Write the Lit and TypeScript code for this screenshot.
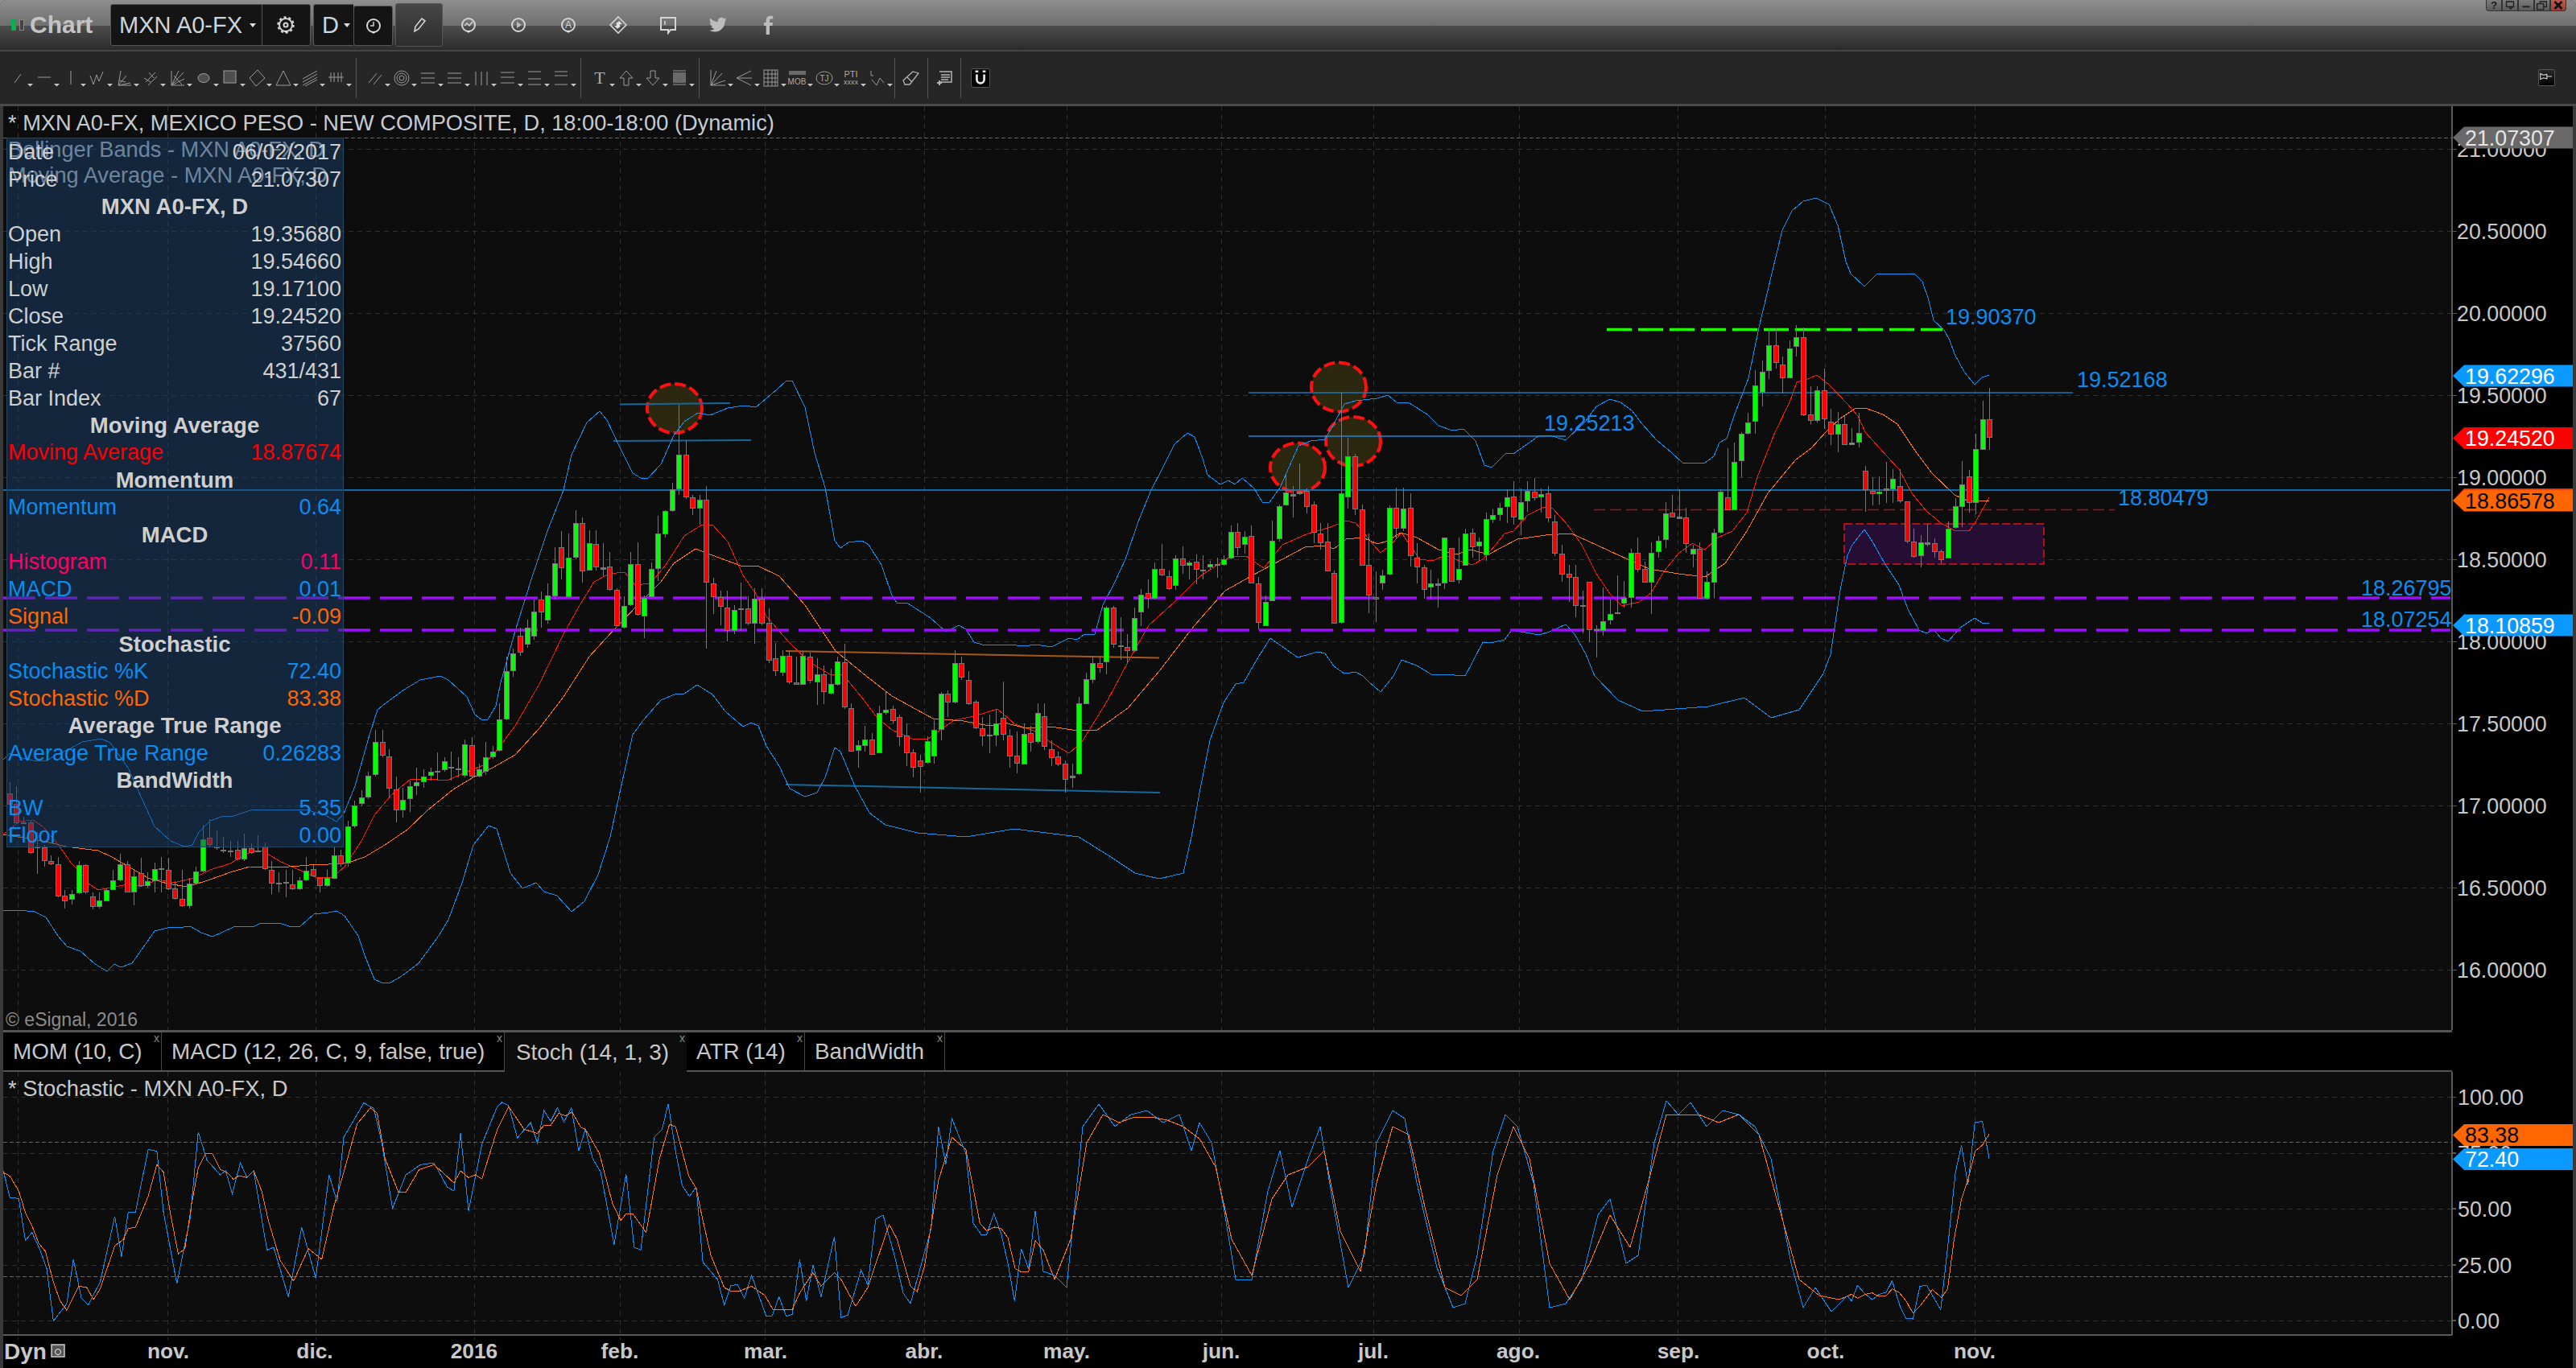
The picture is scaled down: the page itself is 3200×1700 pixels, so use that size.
import { LitElement, html, svg, css } from 'lit';
import { customElement } from 'lit/decorators.js';

type Bar = [number, number, number, number, number];
type Pt = [number, number];

const G = 1, R = 0, N = 2;

// candles in screen px: body top, body bottom, wick top, wick bottom, colour.
// listed newest first, index k sits at x = LAST_X - k * STEP
const LAST_X = 2471.4;
const STEP = 8.57;

const RECENT: Bar[] = [
	[521,543,482,559,R],[521,558,498,558,G],[558,624,539,639,G],[592,624,584,637,R],[602,629,573,655,G],[629,655,619,657,G],[657,693,648,694,G],[685,695,683,700,R],[675,685,669,693,R],[674,676,651,679,N],
	[674,690,665,705,G],[673,691,657,693,R],[623,672,623,675,R],[604,622,583,625,R],[595,607,583,625,G],[607,609,574,625,N],[611,613,592,627,G],[610,613,593,628,R],[585,608,579,636,R],[538,549,513,556,G],
	[550,552,532,553,G],[527,552,517,553,R],[527,539,512,562,G],[524,539,508,553,R],[485,520,458,533,R],[485,522,480,525,G],[515,522,480,527,R],[419,515,407,517,R],[419,430,404,443,G],[433,469,423,470,G],
	[453,469,443,489,R],[429,450,408,458,R],[429,460,408,471,G],[462,487,448,505,G],[479,523,460,539,G],[525,538,513,540,G],[539,572,537,593,G],[574,633,550,634,G],[618,633,557,634,R],[611,661,608,663,G],
	[662,723,657,743,G],[723,743,710,745,G],[682,743,674,744,R],[682,688,677,705,G],[643,675,631,687,R],[642,644,608,645,N],[637,642,615,643,R],[638,670,624,681,G],[672,685,666,693,G],[687,723,674,763,G],
	[707,723,698,723,R],[687,707,668,711,R],[687,742,682,755,G],[743,749,722,755,G],[761,762,715,763,N],
];

const SUMMER: Bar[] = [
	[763,770,745,776,G],[772,783,730,790,G],[782,783,777,817,N],[723,782,723,798,R],[752,753,734,787,N],[717,752,702,767,R],[713,717,702,748,R],[688,713,677,723,R],[648,687,640,691,R],[613,643,604,649,R],
	[614,617,607,637,G],[611,618,594,622,R],[610,622,598,636,G],[624,645,607,665,G],[617,642,598,652,R],[618,629,608,650,G],[631,639,625,647,G],[640,645,633,650,G],[645,689,637,697,G],[673,678,668,697,G],
	[662,679,657,693,R],[663,702,657,703,G],[707,720,668,725,G],[681,722,681,723,R],[668,724,668,732,G],[725,727,719,755,N],[725,729,708,745,G],[705,732,702,744,R],[693,704,675,725,R],[631,690,613,704,R],
	[632,656,606,660,G],[631,656,606,670,R],[631,713,628,715,G],[715,724,708,733,G],[742,744,710,773,R],[702,739,663,762,R],[633,702,627,703,R],[567,632,564,640,R],[567,617,544,632,G],[613,773,488,775,G],
	[712,774,709,775,R],[673,709,650,710,R],[663,674,650,683,R],[627,661,623,675,R],[610,629,607,638,R],[611,613,576,615,N],[614,616,604,643,N],[612,627,588,628,G],[629,669,627,673,G],[672,746,647,747,G],
	[748,777,740,778,G],[725,773,717,782,R],[666,724,653,724,R],[667,676,660,688,G],[661,680,650,690,R],[661,693,653,695,G],[695,701,690,703,G],[701,702,693,718,N],[701,704,697,708,G],[708,709,690,720,N],
	[698,707,689,726,R],[699,702,697,720,G],[694,702,679,713,R],[694,727,690,733,G],[716,731,709,733,R],[707,714,676,716,R],[707,743,699,745,G],[737,743,720,756,R],[739,760,732,778,G],[768,808,755,810,G],
	[804,808,788,825,R],[802,803,767,820,N],[755,800,753,805,R],[755,822,753,838,G],[824,829,817,836,R],[824,844,816,849,G],
];

const SPRING: Bar[] = [
	[844,874,836,875,G],[874,961,866,963,G],[964,966,949,979,N],[949,968,945,985,R],[940,949,934,952,R],[931,941,920,952,R],[890,927,874,932,R],[886,921,874,924,G],[911,922,902,934,R],[912,949,899,950,G],
	[939,948,909,961,R],[914,939,906,954,R],[892,912,847,920,R],[899,913,881,927,G],[913,914,888,936,N],[905,914,891,927,R],[872,904,870,906,R],[845,874,834,876,R],[824,841,816,845,R],[824,872,808,874,G],
	[862,872,858,891,R],[862,906,860,920,G],[907,939,895,949,G],[921,947,915,949,G],[945,952,938,985,R],[935,953,931,966,R],[914,935,899,952,R],[891,915,888,927,R],[881,895,877,899,R],[882,885,859,888,G],
	[886,935,877,936,G],[919,937,911,938,R],[919,926,902,934,G],[926,932,920,954,G],[880,933,874,934,R],[823,878,800,881,R],[822,850,816,852,G],[850,861,831,863,G],[838,859,827,875,R],[838,847,818,876,G],
	[816,845,811,849,R],[815,850,809,851,G],[848,850,816,850,R],[815,847,809,850,R],[815,835,808,840,G],[818,833,799,840,R],[774,820,756,824,R],[744,774,731,777,R],[744,774,731,800,G],[756,774,741,777,R],
	[756,757,724,784,N],[758,783,752,788,G],[755,783,734,797,R],[742,753,734,777,R],[725,741,718,763,R],[621,723,604,806,R],[621,631,615,652,G],[618,631,615,640,R],[565,617,547,620,R],[565,607,503,615,G],
	[608,634,600,636,G],[635,663,634,668,G],[663,706,641,722,G],[707,741,699,743,G],[743,765,740,793,G],[701,763,674,765,R],[701,751,686,753,G],[753,779,741,781,G],[733,777,731,779,R],[704,732,686,734,R],
	[705,707,675,716,N],[676,704,659,709,R],[675,708,659,709,G],[650,709,643,724,R],[650,692,634,695,G],[693,741,663,743,G],
	[680,705,660,720,R],[700,740,680,745,G],[740,770,725,775,G],[745,760,735,780,R],[760,790,745,795,G],[780,800,770,805,G],[790,810,780,815,R],
];

// oldest stretch, written left to right, flipped below
const WINTER: Bar[] = [
	[986,999,972,1011,R],[999,1022,977,1022,R],[1022,1023,1015,1023,N],[1022,1059,1020,1061,R],[1052,1053,1034,1086,N],[1053,1069,1050,1077,R],[1070,1073,1063,1075,R],[1074,1113,1065,1115,R],[1113,1119,1106,1129,R],[1111,1117,1106,1124,G],
	[1075,1109,1070,1111,G],[1075,1108,1074,1111,R],[1114,1126,1109,1130,R],[1119,1126,1109,1129,G],[1106,1119,1104,1120,G],[1094,1105,1081,1106,G],[1074,1093,1061,1095,G],[1074,1108,1070,1109,R],[1089,1108,1081,1125,G],[1085,1100,1066,1102,R],
	[1095,1100,1084,1103,G],[1080,1094,1072,1109,G],[1079,1080,1065,1109,N],[1081,1104,1066,1106,R],[1104,1116,1095,1118,R],[1117,1125,1081,1127,R],[1098,1125,1091,1129,G],[1083,1097,1077,1099,G],[1043,1082,1025,1084,G],[1041,1049,1018,1052,R],
	[1052,1053,1032,1056,N],[1056,1057,1040,1060,R],[1057,1058,1045,1065,N],[1056,1067,1045,1068,R],[1054,1067,1036,1070,G],[1054,1059,1048,1061,R],[1057,1058,1038,1059,N],[1052,1079,1047,1081,R],[1081,1097,1070,1111,R],[1097,1098,1084,1109,N],
	[1096,1097,1081,1115,N],[1099,1104,1081,1106,R],[1094,1104,1090,1106,G],[1082,1093,1065,1095,G],[1080,1088,1075,1090,R],[1091,1100,1090,1109,R],[1091,1100,1081,1102,G],[1063,1091,1052,1092,G],[1063,1073,1056,1077,R],[1027,1072,1020,1077,G],
	[1001,1026,995,1029,G],[991,998,982,1002,G],[964,990,959,993,G],[922,962,907,965,G],[922,938,907,941,R],[940,979,931,990,R],[981,1006,965,1022,R],[994,1006,979,1016,G],[977,992,970,1009,G],[972,976,954,988,G],
	[965,971,956,979,G],[959,963,954,970,G],[958,959,935,970,N],[946,956,941,959,G],[953,954,934,970,N],[955,956,941,966,N],[925,963,919,966,G],[926,964,916,966,R],[956,964,949,966,G],[941,958,922,963,G],
	[934,940,927,943,G],[894,932,874,934,G],[834,893,816,895,G],[812,833,806,841,G],
];

const BARS: Bar[] = [...RECENT, ...SUMMER, ...SPRING, ...[...WINTER].reverse()];

const UPPER: Pt[] = [[4,944],[12,936],[24,941],[41,945],[57,946],[69,938],[86,931],[102,922],[126,918],[137,923],[159,954],[171,981],[192,1027],[212,1045],[229,1052],[239,1050],[247,1034],[261,1020],[278,1014],[290,1014],[314,1006],[380,1006],[404,1013],[418,1021],[427,1011],[441,977],[459,913],[469,882],[480,873],[502,857],[522,845],[547,840],[557,845],[580,866],[590,888],[598,894],[606,894],[616,877],[622,848],[633,809],[640,784],[660,720],[680,660],[700,609],[710,565],[729,525],[745,511],[754,522],[770,556],[786,588],[796,594],[805,594],[821,577],[837,541],[850,524],[867,513],[882,516],[904,507],[924,504],[939,506],[965,484],[977,473],[984,473],[1000,506],[1012,563],[1025,606],[1037,672],[1044,681],[1054,674],[1071,672],[1079,677],[1095,702],[1108,740],[1114,749],[1128,750],[1156,768],[1175,785],[1191,777],[1200,782],[1210,798],[1220,801],[1255,801],[1271,803],[1287,801],[1306,804],[1328,793],[1338,795],[1347,788],[1360,788],[1370,752],[1385,723],[1398,695],[1414,648],[1430,609],[1443,584],[1459,552],[1475,538],[1484,543],[1494,570],[1500,590],[1516,602],[1526,597],[1534,602],[1543,594],[1558,607],[1568,624],[1577,624],[1590,606],[1613,554],[1628,548],[1646,546],[1657,527],[1670,502],[1684,498],[1711,495],[1724,491],[1735,500],[1751,501],[1773,515],[1787,529],[1804,535],[1818,533],[1833,548],[1844,578],[1853,581],[1871,563],[1880,564],[1911,542],[1925,541],[1945,547],[1970,523],[1983,505],[2000,496],[2013,500],[2027,510],[2040,527],[2058,547],[2076,562],[2091,576],[2118,575],[2129,567],[2136,550],[2145,545],[2154,517],[2172,470],[2185,407],[2201,340],[2214,286],[2226,262],[2240,250],[2256,246],[2272,254],[2283,280],[2293,325],[2299,340],[2316,356],[2332,340],[2368,340],[2379,341],[2388,350],[2395,370],[2402,398],[2415,410],[2422,423],[2428,440],[2440,462],[2453,478],[2462,469],[2471,466]];

const LOWER: Pt[] = [[4,1131],[22,1131],[43,1133],[57,1140],[72,1163],[83,1176],[100,1182],[118,1198],[133,1207],[142,1198],[150,1202],[164,1197],[192,1157],[212,1152],[221,1153],[236,1151],[250,1159],[264,1164],[290,1152],[316,1151],[324,1147],[347,1147],[362,1152],[373,1151],[390,1136],[408,1134],[418,1132],[428,1138],[445,1163],[453,1187],[465,1217],[474,1221],[485,1221],[499,1213],[520,1197],[545,1163],[557,1143],[574,1097],[588,1050],[607,1026],[617,1030],[634,1085],[649,1104],[666,1097],[676,1108],[692,1113],[710,1133],[726,1120],[743,1087],[758,1040],[771,980],[786,913],[799,895],[821,870],[840,862],[850,862],[866,851],[885,863],[901,884],[923,903],[933,898],[942,902],[952,927],[968,952],[981,980],[1000,990],[1015,985],[1025,966],[1037,929],[1044,934],[1062,977],[1080,1010],[1100,1025],[1140,1035],[1200,1040],[1260,1030],[1300,1035],[1340,1040],[1380,1065],[1410,1085],[1440,1092],[1470,1085],[1480,1040],[1491,980],[1503,920],[1520,873],[1535,850],[1545,848],[1561,820],[1578,793],[1595,805],[1612,817],[1637,810],[1646,812],[1657,828],[1670,837],[1684,835],[1693,840],[1700,847],[1715,860],[1731,840],[1741,820],[1760,827],[1778,838],[1793,838],[1820,840],[1829,823],[1842,798],[1856,798],[1869,795],[1878,783],[1889,785],[1912,789],[1925,785],[1945,776],[1956,788],[1970,813],[1981,840],[2010,870],[2041,884],[2122,878],[2167,867],[2200,892],[2235,882],[2265,837],[2274,813],[2279,780],[2286,733],[2295,690],[2301,677],[2316,658],[2326,673],[2341,700],[2359,727],[2370,757],[2384,783],[2393,787],[2402,782],[2411,793],[2420,797],[2435,780],[2453,768],[2462,774],[2471,775]];

const MA_RED: Pt[] = [[4,1037],[24,1021],[41,1019],[53,1027],[69,1045],[88,1072],[100,1084],[110,1098],[122,1106],[143,1102],[163,1098],[175,1102],[196,1093],[216,1097],[241,1091],[261,1081],[286,1073],[314,1057],[326,1057],[347,1070],[367,1079],[392,1090],[412,1091],[428,1077],[449,1045],[465,1013],[486,988],[510,968],[531,968],[555,970],[580,959],[600,951],[616,934],[640,902],[670,850],[700,788],[719,754],[738,723],[757,713],[776,711],[789,727],[808,725],[827,702],[850,666],[872,652],[885,652],[904,673],[923,715],[939,738],[952,766],[980,798],[1006,823],[1031,838],[1047,838],[1070,866],[1089,891],[1108,907],[1133,918],[1153,918],[1185,895],[1210,890],[1239,881],[1261,900],[1287,909],[1306,923],[1328,936],[1344,922],[1376,870],[1401,823],[1427,777],[1459,748],[1491,716],[1529,691],[1548,691],[1570,706],[1593,677],[1625,663],[1650,656],[1673,647],[1684,650],[1695,663],[1706,677],[1715,687],[1728,677],[1741,662],[1753,680],[1764,695],[1780,697],[1795,690],[1813,697],[1829,702],[1842,695],[1858,677],[1869,663],[1880,660],[1898,640],[1918,630],[1929,632],[1947,652],[1965,677],[1983,713],[2000,738],[2015,753],[2036,748],[2051,737],[2067,710],[2085,688],[2102,675],[2118,683],[2134,668],[2152,660],[2170,637],[2183,593],[2205,537],[2223,500],[2232,475],[2248,470],[2257,466],[2272,478],[2295,502],[2308,517],[2317,537],[2344,567],[2359,583],[2375,613],[2393,635],[2411,650],[2428,659],[2446,660],[2455,647],[2471,618]];

const MA_ORANGE: Pt[] = [[4,1037],[53,1045],[82,1052],[122,1057],[139,1065],[163,1079],[184,1091],[208,1098],[233,1102],[261,1093],[286,1084],[310,1077],[347,1078],[384,1075],[408,1074],[433,1072],[453,1065],[478,1050],[506,1031],[531,1007],[563,981],[588,966],[612,954],[640,938],[670,905],[700,866],[732,816],[764,781],[796,748],[821,723],[837,700],[864,682],[885,690],[920,703],[941,703],[968,716],[1000,752],[1038,809],[1076,840],[1108,865],[1159,893],[1197,896],[1229,902],[1248,898],[1274,905],[1306,903],[1338,908],[1363,907],[1401,880],[1440,834],[1484,777],[1522,734],[1554,716],[1593,695],[1621,680],[1644,678],[1657,682],[1672,670],[1693,668],[1711,676],[1724,672],[1740,662],[1760,668],[1787,683],[1809,689],[1827,683],[1849,689],[1885,670],[1920,665],[1952,663],[1983,677],[2000,685],[2022,695],[2049,707],[2085,713],[2118,717],[2143,700],[2170,660],[2196,613],[2230,572],[2250,557],[2268,537],[2286,520],[2304,508],[2317,507],[2339,515],[2357,527],[2379,560],[2399,587],[2428,615],[2446,623],[2471,622]];

// stochastic traced off crops: [x, y] in crop units, turned into screen px by trace()
const K_OLD = [5,645,15,745,28,748,38,905,48,875,60,940,70,1010,80,1205,100,1140,110,975,122,1120,132,1145,150,1060,172,815,182,965,192,800,203,800,222,565,235,572,245,800,265,1065,285,820,297,500,310,605,330,660,338,645,348,730,360,615,370,670,380,645,400,940,410,930,432,1115,452,855,473,1045,493,660,505,760,515,520,545,392,560,412,572,540,588,785,608,660,630,622,650,615,670,705,680,720,690,505,702,795,722,545,745,405,752,390,762,402,775,522,795,465,805,540,815,420,825,460,835,410,845,462,856,410,867,570,877,490,888,600,900,650,920,920,938,657,950,930,960,940,980,520,992,490,1001,395,1012,570,1022,700,1033,740,1043,705,1053,985,1075,1050,1085,1145,1095,1072,1105,1070,1115,1120,1126,1035,1148,1187,1157,1185,1167,1115,1178,1187,1187,1180,1198,975,1208,1130,1218,995,1230,1115,1250,890,1260,1192,1270,1183,1290,1015,1300,1070,1312,825,1323,810,1340,960,1353,1100,1364,1140,1395,860,1406,480,1417,620,1426,450,1447,580,1458,840,1470,883,1478,883,1489,805,1500,880,1510,990,1520,1130,1530,935,1541,1010,1551,795,1563,1020];
const D_OLD = [5,650,15,665,28,720,38,800,48,850,58,915,68,945,80,1060,90,1130,100,1165,118,1075,130,1080,140,1125,150,1085,172,925,185,900,192,860,203,855,222,740,235,622,245,650,255,800,267,955,277,935,287,770,297,635,308,580,318,580,330,640,340,650,350,677,358,663,370,670,380,645,392,720,402,830,420,980,440,1055,462,935,482,975,500,780,515,650,535,470,555,410,565,430,577,600,597,725,608,725,628,640,650,622,665,655,680,690,690,645,702,670,712,660,722,675,745,490,762,405,785,490,805,505,815,475,825,475,837,430,847,440,857,425,870,482,877,490,898,580,918,770,930,830,938,805,948,805,968,875,988,600,1003,472,1012,480,1032,665,1043,710,1053,830,1065,960,1085,1080,1095,1093,1108,1093,1126,1075,1146,1110,1158,1162,1187,1162,1198,1100,1218,1025,1230,1075,1250,1025,1260,1050,1282,1150,1300,1080,1332,845,1344,900,1364,1075,1374,1095,1385,1000,1406,680,1426,520,1447,565,1468,840,1478,868,1490,855,1500,860,1510,895,1521,1010,1530,1022,1541,1020,1551,905,1563,940];
const K_MID: Pt[] = [[1310,1585],[1325,1600],[1345,1400],[1365,1372],[1385,1400],[1405,1385],[1425,1380],[1445,1395],[1465,1385],[1480,1430],[1490,1395],[1505,1420],[1520,1500],[1535,1590],[1555,1590],[1575,1480],[1590,1430],[1605,1500],[1625,1440],[1640,1400],[1655,1490],[1675,1600],[1695,1560],[1710,1420],[1730,1380],[1745,1390],[1760,1470],[1785,1575],[1805,1625],[1820,1620],[1835,1560],[1855,1430],[1870,1385],[1885,1400],[1905,1470],[1925,1625],[1945,1620],[1965,1590],[1985,1510],[2000,1490],[2020,1570],[2035,1560],[2055,1420],[2070,1368],[2085,1385],[2100,1370],[2120,1400],[2140,1380],[2160,1385],[2180,1400],[2200,1440],[2225,1570],[2240,1625],[2255,1600],[2275,1630],[2295,1610]];
const D_MID: Pt[] = [[1310,1590],[1330,1540],[1350,1420],[1370,1385],[1390,1395],[1410,1388],[1430,1388],[1450,1392],[1470,1400],[1490,1415],[1510,1450],[1530,1540],[1555,1585],[1580,1490],[1600,1460],[1625,1450],[1645,1430],[1665,1530],[1690,1580],[1710,1470],[1730,1400],[1750,1410],[1770,1500],[1795,1600],[1815,1610],[1835,1590],[1860,1460],[1880,1400],[1900,1440],[1925,1570],[1950,1615],[1975,1570],[2000,1510],[2025,1550],[2050,1460],[2070,1385],[2090,1385],[2110,1385],[2135,1395],[2160,1385],[2185,1410],[2210,1500],[2235,1590],[2260,1610],[2285,1615]];
const K_NEW = [0,1130,13,1072,30,1105,45,1125,60,1105,75,1098,88,1055,105,1150,118,1195,133,1197,148,1075,163,1072,193,1163,210,900,225,650,238,550,252,695,267,465,283,460,298,600];
const D_NEW = [0,1105,13,1120,30,1105,45,1100,58,1112,75,1110,88,1085,103,1098,118,1130,133,1175,148,1150,175,1088,195,1118,208,1085,222,900,238,750,252,680,268,570,283,550,298,508];

const trace = (flat: number[], x0: number, sx: number): Pt[] => {
	const out: Pt[] = [];
	for (let i = 0; i < flat.length; i += 2) out.push([x0 + flat[i] / sx, 1240 + flat[i + 1] / 3]);
	return out;
};
const STOCH_K: Pt[] = [...trace(K_OLD, 0, 1.206), ...K_MID, ...trace(K_NEW, 2300, 1.742)];
const STOCH_D: Pt[] = [...trace(D_OLD, 0, 1.206), ...D_MID, ...trace(D_NEW, 2300, 1.742)];

const poly = (p: Pt[]) => p.map((q) => q.join(',')).join(' ');

const V_GRID = [22, 208.6, 392, 589, 770, 950.5, 1148.5, 1325.5, 1517, 1706, 1887, 2084, 2267, 2453.6];
const MONTHS: [string, number][] = [['nov.',209],['dic.',391],['2016',589],['feb.',770],['mar.',951],['abr.',1148],['may.',1325],['jun.',1517],['jul.',1706],['ago.',1886],['sep.',2085],['oct.',2268],['nov.',2453]];
const PRICES = ['21.00000','20.50000','20.00000','19.50000','19.00000','18.50000','18.00000','17.50000','17.00000','16.50000','16.00000'];

type Row = { l?: string; r?: string; h?: string; c?: string };
const ROWS: Row[] = [
	{ l: 'Date', r: '06/02/2017' }, { l: 'Price', r: '21.07307' },
	{ h: 'MXN A0-FX, D' },
	{ l: 'Open', r: '19.35680' }, { l: 'High', r: '19.54660' }, { l: 'Low', r: '19.17100' }, { l: 'Close', r: '19.24520' },
	{ l: 'Tick Range', r: '37560' }, { l: 'Bar #', r: '431/431' }, { l: 'Bar Index', r: '67' },
	{ h: 'Moving Average' }, { l: 'Moving Average', r: '18.87674', c: 'red' },
	{ h: 'Momentum' }, { l: 'Momentum', r: '0.64', c: 'blue' },
	{ h: 'MACD' }, { l: 'Histogram', r: '0.11', c: 'pink' }, { l: 'MACD', r: '0.01', c: 'blue' }, { l: 'Signal', r: '-0.09', c: 'orange' },
	{ h: 'Stochastic' }, { l: 'Stochastic %K', r: '72.40', c: 'blue' }, { l: 'Stochastic %D', r: '83.38', c: 'orange' },
	{ h: 'Average True Range' }, { l: 'Average True Range', r: '0.26283', c: 'blue' },
	{ h: 'BandWidth' }, { l: 'BW', r: '5.35', c: 'blue' }, { l: 'Floor', r: '0.00', c: 'blue' },
];

const TABS = [
	{ t: 'MOM (10, C)', w: 197 }, { t: 'MACD (12, 26, C, 9, false, true)', w: 426 },
	{ t: 'Stoch (14, 1, 3)', w: 226, on: true }, { t: 'ATR (14)', w: 147 }, { t: 'BandWidth', w: 174 },
];

// drawing tools, paths in a 24 box
const TOOLS_A = [
	'M8 18L16 7', 'M4 11H20', 'M12 3V20', 'M3 9L7 20L11 8L14 16L19 4',
	'M5 21L8 3M5 21L15 9M5 21L20 18M5 21L21 21M6 15L14 17', 'M6 17L18 5M4 12L12 17M10 5L16 12M9 21L20 10',
	'M5 3V21H21M5 21L20 5M5 21L14 3M5 21L21 13M8 9L18 20', 'E', 'S', 'M13 2L22 12L11 22L3 12Z', 'M12 3L21 21H3Z',
	'M3 13L21 3M3 17L21 7M3 21L21 11M6 22L21 14', 'M2 11H21M5 5V17M9 5V17M14 5V17M18 5V17',
];
const TOOLS_B = [
	'M4 18L14 6M10 20L20 8', 'C', 'M3 6H20M3 12H20M3 18H20', 'M3 6H20M3 12H20M3 18H20', 'M5 4V21M12 4V21M19 4V21',
	'M3 5H20M3 11H20M3 18H20', 'M4 4H20M4 13H20M4 20H20', 'M4 4H20M4 9H20M4 20H20',
];
const TOOLS_C = ['T', 'M12 3L20 12H15V21H9V12H4Z', 'M9 3H15V12H20L12 21L4 12H9Z', 'F'];
const TOOLS_D = ['M3 2V21H21M3 21L17 6M3 21L21 15M3 21L10 3', 'M2 12L20 3M2 12L21 12M2 12L20 21', 'G', 'MOB', 'TJ', 'PTI', 'M4 3V9H7M5 14L11 21L15 12L20 18'];

const tool = (d: string) => svg`<svg class="tool" viewBox="0 0 33 30" width="33" height="30">
	<g transform="translate(0 3)">${glyph(d)}</g>
	<path class="caret" d="M24 22h7l-3.5 3.5z"/>
</svg>`;

const glyph = (d: string) => {
	switch (d) {
		case 'E': return svg`<ellipse class="shade" cx="12" cy="12" rx="7" ry="5.5"/>`;
		case 'S': return svg`<rect class="shade" x="4" y="3" width="15" height="15"/>`;
		case 'C': return svg`<circle cx="12" cy="12" r="9"/><circle cx="12" cy="12" r="6"/><circle cx="12" cy="12" r="3"/>`;
		case 'T': return svg`<text class="ic-t" x="12" y="19" text-anchor="middle" style="font-size:22px;font-family:'Liberation Serif',serif">T</text>`;
		case 'F': return svg`<path d="M4 3H20M4 20H20"/><rect class="dark" x="4" y="5" width="16" height="13"/>`;
		case 'G': return svg`<rect x="3" y="2" width="17" height="20"/><path d="M3 7H20M3 12H20M3 17H20M8 2V22M13 2V22M17 2V22"/>`;
		case 'MOB': return svg`<rect class="dark" x="1" y="3" width="21" height="5"/><text class="ic-t" x="11" y="20" text-anchor="middle" style="font-size:10px">MOB</text>`;
		case 'TJ': return svg`<ellipse cx="12" cy="12" rx="10" ry="8"/><text class="ic-t" x="12" y="16" text-anchor="middle" style="font-size:10px">TJ</text>`;
		case 'PTI': return svg`<text class="ic-t" x="12" y="11" text-anchor="middle" style="font-size:11px">PTI</text><text class="ic-t" x="12" y="20" text-anchor="middle" style="font-size:9px">xxxx</text>`;
		default: return svg`<path d=${d}/>`;
	}
};

const ring = (inner: unknown, caret = true) => svg`<svg class="ticon" viewBox="0 0 24 24" width="24" height="24">
	<circle cx="12" cy="12" r="8"/>${inner}
	${caret ? svg`<path class="fillc" d="M9 19h6l-3 3z"/>` : ''}
</svg>`;

const dropCaret = html`<svg viewBox="0 0 8 5" width="8" height="5" style="display:block;fill:#ddd"><path d="M0 0H8L4 5Z"/></svg>`;

const WINDOW_ICONS = [
	svg`<text class="wt" x="10" y="12" text-anchor="middle">?</text>`,
	svg`<path d="M5 2H15V9H5ZM8 9L11 12L14 9"/>`,
	svg`<path d="M5 9H15" style="stroke-width:2"/>`,
	svg`<path d="M3 5H12V13H3ZM7 5V2H16V9H12"/>`,
	svg`<path d="M5 2L15 12M15 2L5 12" style="stroke-width:3;stroke:#111"/>`,
];

@customElement('app-root')
export class AppRoot extends LitElement {
	static styles = css`
		:host {
			display: block;
			width: 3200px;
			height: 1700px;
			background: #8f8f8f;
			font-family: "Liberation Sans", Arial, sans-serif;
		}
		.frame {
			display: flex;
			flex-direction: column;
			width: 3200px;
			height: 1700px;
			background: #3a3a3a;
			border-radius: 8px 8px 0 0;
			overflow: hidden;
		}
		.titlebar {
			display: flex;
			align-items: center;
			height: 62px;
			padding-left: 14px;
			background: linear-gradient(#8e8e8e 0, #6f6f6f 32px, #4d4d4d 32px, #2b2b2b 62px);
			border-bottom: 2px solid #454545;
			flex: none;
		}
		.led { width: 6px; height: 14px; margin-right: 4px; background: #16b04a; border: 1px solid #0a5; box-sizing: border-box; }
		.led.off { background: #444; border-color: #888; }
		.name { width: 100px; margin-left: 3px; font-size: 30px; font-weight: bold; color: #c4c4c4; }
		.box {
			display: flex;
			align-items: center;
			height: 52px;
			box-sizing: border-box;
			background: #141414;
			border: 1px solid #555;
			border-radius: 3px;
			color: #ccd4dc;
			font-size: 29px;
		}
		.sym { width: 249px; padding-left: 10px; }
		.sym .cell { width: 170px; display: flex; align-items: center; height: 100%; border-right: 1px solid #555; justify-content: space-between; padding-right: 7px; box-sizing: content-box; }
		.sym .gear { width: 58px; display: flex; justify-content: center; }
		.per { width: 50px; margin-left: 3px; padding-left: 10px; box-sizing: border-box; border-right: 0; border-radius: 3px 0 0 3px; gap: 6px; }
		.clock { width: 49px; height: 50px; margin-top: 2px; justify-content: center; }
		.pen { width: 59px; height: 54px; margin-left: 3px; justify-content: center; background: linear-gradient(#474747, #2c2c2c); }
		.ticons { display: flex; align-items: center; margin-left: 1px; }
		.ticons > span { width: 62px; display: flex; justify-content: center; }
		.ticon { fill: none; stroke: #d4d4d4; stroke-width: 2; display: block; }
		.fillc { fill: #e8e8e8; stroke: none; }
		.solid { fill: #bdbdbd; stroke: none; }
		.mini { font-size: 12px; fill: #d4d4d4; stroke: none; font-family: "Liberation Sans", Arial, sans-serif; }
		.winbtns { display: flex; margin-left: auto; margin-right: 12px; align-self: flex-start; }
		.winbtns svg {
			display: block;
			width: 20px;
			height: 14px;
			box-sizing: border-box;
			background: linear-gradient(#7c7c7c, #5a5a5a);
			border: 1px solid #333;
			border-top: 0;
			fill: none;
			stroke: #1d1d1d;
			stroke-width: 1.4;
		}
		.winbtns svg:first-child { border-radius: 0 0 0 4px; }
		.winbtns svg:last-child { border-radius: 0 0 4px 0; background: linear-gradient(#c05a4c, #9c4034); }
		.wt { font-size: 15px; font-weight: bold; fill: #1d1d1d; stroke: none; font-family: "Liberation Sans", Arial, sans-serif; }

		.toolbar {
			display: flex;
			align-items: center;
			height: 65px;
			padding-left: 10px;
			background: #262626;
			border-bottom: 3px solid #4a4a4a;
			flex: none;
		}
		.tool { display: block; flex: none; fill: none; stroke: #9a9a9a; stroke-width: 1; }
		.solo { width: 40px; display: flex; justify-content: center; }
		.solo svg { display: block; fill: none; stroke: #b4b4b4; stroke-width: 1.3; }
		.caret { fill: #c8c8c8; stroke: none; }
		.shade { fill: #4e4e4e; stroke: #a0a0a0; }
		.dark { fill: #6a6a6a; stroke: none; }
		.ic-t { fill: #aaa; stroke: none; font-family: "Liberation Sans", Arial, sans-serif; }
		.sep { width: 1px; height: 50px; margin: 0 11px 0 3px; background: #555; flex: none; }
		.sep.tight { margin: 0; }
		.magnet { width: 24px; height: 24px; margin-left: 12px; background: #050505; border: 1px solid #555; border-radius: 3px; box-sizing: border-box; }
		.pin {
			margin-left: auto;
			margin-right: 26px;
			width: 19px;
			height: 19px;
			background: linear-gradient(#2a2a2a, #000);
			border: 1px solid #555;
			border-radius: 2px;
		}

		.panes { flex: 1; margin: 0 4px; background: #000; display: flex; flex-direction: column; min-height: 0; }
		.price { position: relative; height: 1148px; flex: none; }
		.chart { display: block; font-family: "Liberation Sans", Arial, sans-serif; }
		.chart polyline { fill: none; stroke-width: 1; shape-rendering: crispEdges; }
		.grid { stroke: #2f2f2f; stroke-width: 1; stroke-dasharray: 6 5; shape-rendering: crispEdges; fill: none; }
		.grid2 { stroke: #666; stroke-width: 1; stroke-dasharray: 5 3; shape-rendering: crispEdges; }
		.axisline { stroke: #5a5a5a; stroke-width: 1.5; shape-rendering: crispEdges; }
		.band { stroke: #0b93f6; }
		.mred { stroke: #ff1a00; }
		.morange { stroke: #ff7a10; }
		.wick { stroke: #777; stroke-width: 1; shape-rendering: crispEdges; }
		.body { stroke: #777; stroke-width: 1; shape-rendering: crispEdges; }
		.bg { fill: #0d0d0d; }
		.ax { font-size: 26.8px; fill: #c8c8c8; }
		.ax-b { font-size: 26.3px; fill: #c8c8c8; font-weight: bold; }
		.lbl { font-size: 27px; fill: #0a8cf0; }
		.ttl { font-size: 27.2px; fill: #c4cbd2; }
		.dim { font-size: 27.2px; fill: #c0c8d0; }
		.copy { font-size: 23px; fill: #8c8c8c; }

		.info {
			position: absolute;
			left: 4px;
			top: 39px;
			width: 419px;
			height: 882px;
			box-sizing: border-box;
			padding: 0.5px 2px 0 1px;
			background: rgba(25, 63, 107, .5);
			border: 1px solid #24465f;
			font-size: 27px;
			color: #cfcfcf;
		}
		.row { display: flex; justify-content: space-between; align-items: center; height: 33.96px; }
		.row.head { justify-content: center; font-weight: bold; font-size: 27.5px; }
		.red { color: #ff0000; }
		.pink { color: #ff0066; }
		.blue { color: #0a8cf0; }
		.orange { color: #ff6600; }

		.tabs {
			display: flex;
			height: 47px;
			flex: none;
			box-sizing: content-box;
			background: #000;
			border-top: 3px solid #555;
			border-bottom: 2px solid #555;
			margin-right: 150px;
			font-size: 27.8px;
			color: #c8c8c8;
		}
		.tab {
			position: relative;
			display: flex;
			align-items: center;
			box-sizing: border-box;
			padding-left: 12px;
			border-right: 1px solid #444;
		}
		.tab.on { background: #0d0d0d; margin-bottom: -2px; border-right: 0; padding-left: 14px; }
		.x { position: absolute; top: -1px; right: 2px; font-size: 14px; color: #888; }
	`;

	renderBars() {
		return BARS.map((b, k) => {
			const x = Math.round(LAST_X - STEP * k);
			const fill = b[4] === G ? '#00ff00' : b[4] === R ? '#ff0000' : '#777';
			return svg`<line class="wick" x1=${x + 0.5} x2=${x + 0.5} y1=${b[2]} y2=${b[3]}/>
				<rect class="body" x=${x - 2.5} y=${b[0]} width="6" height=${Math.max(b[1] - b[0], 1)} style="fill:${fill}"/>`;
		});
	}

	tag(y: number, h: number, text: string, fill: string, ink: string, tip = 14) {
		const top = y - h / 2;
		return svg`<polygon points="3047,${y} ${3047 + tip},${top} 3196,${top} 3196,${top + h} ${3047 + tip},${top + h}" style="fill:${fill}"/>
			<text class="ax" x=${3047 + tip + 1} y=${y + 9.5} style="fill:${ink}">${text}</text>`;
	}

	renderPrice() {
		return html`<svg class="chart" viewBox="4 132 3192 1148" width="3192" height="1148">
			<rect class="bg" x="4" y="132" width="3042" height="1148"/>
			${PRICES.map((_, i) => {
				const y = 185.5 + i * 102;
				return svg`<line class="grid" x1="4" x2="3046" y1=${y} y2=${y}/><line class="axisline" x1="3046" x2="3052" y1=${y} y2=${y}/>`;
			})}
			${V_GRID.map((x) => svg`<line class="grid" x1=${x} x2=${x} y1="132" y2="1280"/>`)}
			<line class="grid2" x1="4" x2="3046" y1="171" y2="171"/>

			<rect x="2291" y="651" width="248" height="50" style="fill:#260d33;stroke:#e01414;stroke-width:1.5;stroke-dasharray:10 4"/>
			${[[838, 507.5], [1663, 481], [1681, 548.5], [1612, 581]].map(([cx, cy]) => svg`
				<ellipse cx=${cx} cy=${cy} rx="34" ry="30.5" style="fill:#2c2810;stroke:#ff1010;stroke-width:4;stroke-dasharray:14 5"/>`)}

			<line x1="4" x2="3044" y1="609" y2="609" style="stroke:#1489dc;stroke-width:1.5"/>
			<line x1="1551" x2="2575" y1="488" y2="488" style="stroke:#1479b8;stroke-width:1.5"/>
			<line x1="1551" x2="1945" y1="542" y2="542" style="stroke:#1489dc;stroke-width:1.5"/>
			<line x1="770" x2="907" y1="502.5" y2="501" style="stroke:#14699c;stroke-width:2"/>
			<line x1="762" x2="933" y1="548" y2="547" style="stroke:#14699c;stroke-width:2"/>
			<line x1="976" x2="1441" y1="975" y2="985" style="stroke:#14699c;stroke-width:2"/>
			<line x1="976" x2="1440" y1="809" y2="817.5" style="stroke:#a8581a;stroke-width:2"/>
			<line x1="1980" x2="2627" y1="633.5" y2="633.5" style="stroke:#a81212;stroke-width:1.5;stroke-dasharray:14 6"/>
			<line x1="1996" x2="2413" y1="409.5" y2="409.5" style="stroke:#1cff00;stroke-width:3.5;stroke-dasharray:31 8"/>

			<polyline class="band" points=${poly(UPPER)}/>
			<polyline class="band" points=${poly(LOWER)}/>
			<polyline class="mred" points=${poly(MA_RED)}/>
			<polyline class="morange" points=${poly(MA_ORANGE)}/>
			<line x1="4" x2="3044" y1="743" y2="743" style="stroke:#a00cff;stroke-width:3.5;stroke-dasharray:40 12"/>
			<line x1="4" x2="3044" y1="783" y2="783" style="stroke:#a00cff;stroke-width:3.5;stroke-dasharray:40 12"/>
			${this.renderBars()}

			<text class="lbl" x="2417" y="403">19.90370</text>
			<text class="lbl" x="2580" y="481">19.52168</text>
			<text class="lbl" x="1918" y="535">19.25213</text>
			<text class="lbl" x="2631" y="628">18.80479</text>
			<text class="lbl" x="2933" y="740">18.26795</text>
			<text class="lbl" x="2933" y="779">18.07254</text>

			<text class="ttl" x="10" y="162">* MXN A0-FX, MEXICO PESO - NEW COMPOSITE, D, 18:00-18:00 (Dynamic)</text>
			<text class="dim" x="10" y="195">Bollinger Bands - MXN A0-FX, D</text>
			<text class="dim" x="10" y="227">Moving Average - MXN A0-FX, D</text>
			<text class="copy" x="7" y="1275">© eSignal, 2016</text>

			<line class="axisline" x1="3046" x2="3046" y1="132" y2="1280"/>
			${PRICES.map((p, i) => svg`<text class="ax" x="3052" y=${185.5 + i * 102 + 9.5}>${p}</text>`)}
			${this.tag(171, 27, '21.07307', '#696969', '#e4e4e4')}
			${this.tag(467, 27, '19.62296', '#0a99ff', '#fff')}
			${this.tag(544.5, 27, '19.24520', '#ff0000', '#fff')}
			<polygon points="3047,621 3061,607 3196,607 3196,609 3061,609" style="fill:#ff1a00"/>
			${this.tag(622, 27, '18.86578', '#ff6600', '#000')}
			${this.tag(777, 27, '18.10859', '#0a99ff', '#fff')}
		</svg>`;
	}

	renderStudy() {
		const lv = [1363.7, 1433, 1502, 1572, 1641];
		return html`<svg class="chart" viewBox="4 1332 3192 364" width="3192" height="364">
			<rect class="bg" x="4" y="1332" width="3042" height="327"/>
			${lv.map((y) => svg`<line class="grid" x1="4" x2="3046" y1=${y} y2=${y}/><line class="axisline" x1="3046" x2="3051" y1=${y} y2=${y}/>`)}
			<line class="grid2" x1="4" x2="3046" y1="1419.5" y2="1419.5"/>
			<line class="grid2" x1="4" x2="3046" y1="1586.5" y2="1586.5"/>
			${V_GRID.map((x) => svg`<line class="grid" x1=${x} x2=${x} y1="1332" y2="1665"/>`)}
			<polyline class="band" points=${poly(STOCH_K)}/>
			<polyline class="morange" points=${poly(STOCH_D)}/>
			<text class="ax" x="10" y="1362" style="font-size:27.3px">* Stochastic - MXN A0-FX, D</text>
			<line x1="4" x2="3046" y1="1659" y2="1659" style="stroke:#5a5a5a;stroke-width:2"/>
			<line class="axisline" x1="3046" x2="3046" y1="1332" y2="1659"/>
			${[['100.00', 1363.7], ['75.00', 1433], ['50.00', 1502], ['25.00', 1572], ['0.00', 1641]].map(([t, y]) => svg`
				<text class="ax" x="3053" y=${(y as number) + 9.5}>${t}</text>`)}
			${this.tag(1410.5, 27, '83.38', '#ff6600', '#000')}
			${this.tag(1440.5, 27, '72.40', '#0a99ff', '#fff')}
			<text class="ax-b" x="5" y="1689" style="font-size:28px">Dyn</text>
			<rect x="64" y="1671" width="16" height="15" style="fill:#555;stroke:#ccc;stroke-width:1.5"/>
			<circle cx="72" cy="1680" r="3.5" style="fill:none;stroke:#eee;stroke-width:1"/>
			${MONTHS.map(([t, x]) => svg`<text class="ax-b" x=${x} y="1688" text-anchor="middle">${t}</text>`)}
		</svg>`;
	}

	render() {
		return html`<div class="frame">
			<div class="titlebar">
				<span class="led"></span><span class="led off"></span>
				<span class="name">Chart</span>
				<div class="box sym">
					<div class="cell">MXN A0-FX${dropCaret}</div>
					<div class="gear">${ring(svg`<circle cx="12" cy="12" r="9.5" style="stroke-dasharray:3 3;stroke-width:2.5"/><circle cx="12" cy="12" r="2.5"/>`)}</div>
				</div>
				<div class="box per">D${dropCaret}</div>
				<div class="box clock">${ring(svg`<path d="M12 7V12H8" style="stroke-width:1.5"/>`)}</div>
				<div class="box pen">
					<svg class="ticon" viewBox="0 0 24 24" width="24" height="24"><path d="M6 20L7 14L15 4L19 7L11 17Z" style="stroke-width:1.6"/></svg>
				</div>
				<div class="ticons">
					<span>${ring(svg`<path d="M7 13L10 10L13 13L17 8" style="stroke-width:1.5"/>`)}</span>
					<span>${ring(svg`<path class="solid" d="M10 8L16 12L10 16Z"/>`, false)}</span>
					<span>${ring(svg`<text class="mini" x="12" y="16" text-anchor="middle">A</text>`)}</span>
					<span><svg class="ticon" viewBox="0 0 24 24" width="24" height="24"><path d="M12 2L22 12L12 22L2 12Z" style="stroke-width:1.6"/><path class="solid" d="M13 7L17 11H14V15H12V11H9ZM11 17L7 13H10V9H12V13H15Z" style="fill:#e0e0e0"/></svg></span>
					<span><svg class="ticon" viewBox="0 0 24 24" width="24" height="24"><path d="M3 3H21V18H15L12 22L12 18H3Z" style="stroke-width:2"/><path d="M8 7V12" style="stroke-width:1.5"/></svg></span>
					<span><svg viewBox="0 0 24 24" width="24" height="24"><path class="solid" d="M23 4.9c-.8.4-1.7.6-2.6.7.9-.6 1.6-1.4 2-2.5-.9.5-1.9.9-2.9 1.1-.8-.9-2-1.4-3.3-1.4-2.5 0-4.5 2-4.5 4.5 0 .4 0 .7.1 1C7.9 8.1 4.6 6.3 2.4 3.6c-.4.7-.6 1.4-.6 2.3 0 1.6.8 3 2 3.8-.7 0-1.4-.2-2-.6v.1c0 2.2 1.6 4 3.6 4.4-.4.1-.8.2-1.2.2-.3 0-.6 0-.8-.1.6 1.8 2.2 3.1 4.2 3.1-1.5 1.2-3.5 1.9-5.6 1.9-.4 0-.7 0-1.1-.1 2 1.3 4.4 2 6.9 2 8.3 0 12.8-6.9 12.8-12.8v-.6c.9-.6 1.6-1.4 2.2-2.3z"/></svg></span>
					<span><svg viewBox="0 0 24 24" width="24" height="24"><path class="solid" d="M14 24V13h3.5l.5-4h-4V6.5c0-1.2.3-2 2-2H18.2V1c-.4 0-1.7-.2-3.2-.2-3.2 0-5.3 1.9-5.3 5.5V9H7v4h2.7v11z"/></svg></span>
				</div>
				<div class="winbtns">
					${WINDOW_ICONS.map((w) => html`<svg viewBox="0 0 20 14">${w}</svg>`)}
				</div>
			</div>

			<div class="toolbar">
				${TOOLS_A.map(tool)}<span class="sep"></span>
				${TOOLS_B.map(tool)}<span class="sep"></span>
				${TOOLS_C.map(tool)}<span class="sep"></span>
				${TOOLS_D.map(tool)}<span class="sep tight"></span>
				<span class="solo"><svg viewBox="0 0 24 24" width="24" height="24"><path d="M4 20L2 15L14 4L21 6L10 20ZM7 11L13 17"/></svg></span>
				<span class="sep tight"></span>
				<span class="solo"><svg viewBox="0 0 24 24" width="24" height="24"><path d="M6 4H21V17H6M8 8H19M8 11H19M8 14H17" style="stroke-width:1.5"/><path d="M3 18H9M6 15V21" style="stroke-width:2"/></svg></span>
				<span class="sep tight"></span>
				<span class="magnet"><svg viewBox="0 0 24 24" width="22" height="22" style="display:block;fill:none;stroke:#e4e4e4;stroke-width:3"><path d="M7 7V14A5 5 0 0 0 17 14V7"/><path d="M5 3H9M15 3H19" style="stroke-width:2.5"/></svg></span>
				<span class="pin"><svg viewBox="0 0 19 19" width="17" height="17" style="display:block;fill:none;stroke:#ddd;stroke-width:1.2"><path d="M2 5L6 7L11 6V12L6 11L2 13ZM11 9H18"/></svg></span>
			</div>

			<div class="panes">
				<div class="price">
					${this.renderPrice()}
					<div class="info">
						${ROWS.map((r) => r.h
							? html`<div class="row head">${r.h}</div>`
							: html`<div class="row ${r.c ?? ''}"><span>${r.l}</span><span>${r.r}</span></div>`)}
					</div>
				</div>
				<div class="tabs">
					${TABS.map((t) => html`<div class="tab ${t.on ? 'on' : ''}" style="width:${t.w}px">${t.t}<span class="x">x</span></div>`)}
				</div>
				${this.renderStudy()}
			</div>
		</div>`;
	}
}
